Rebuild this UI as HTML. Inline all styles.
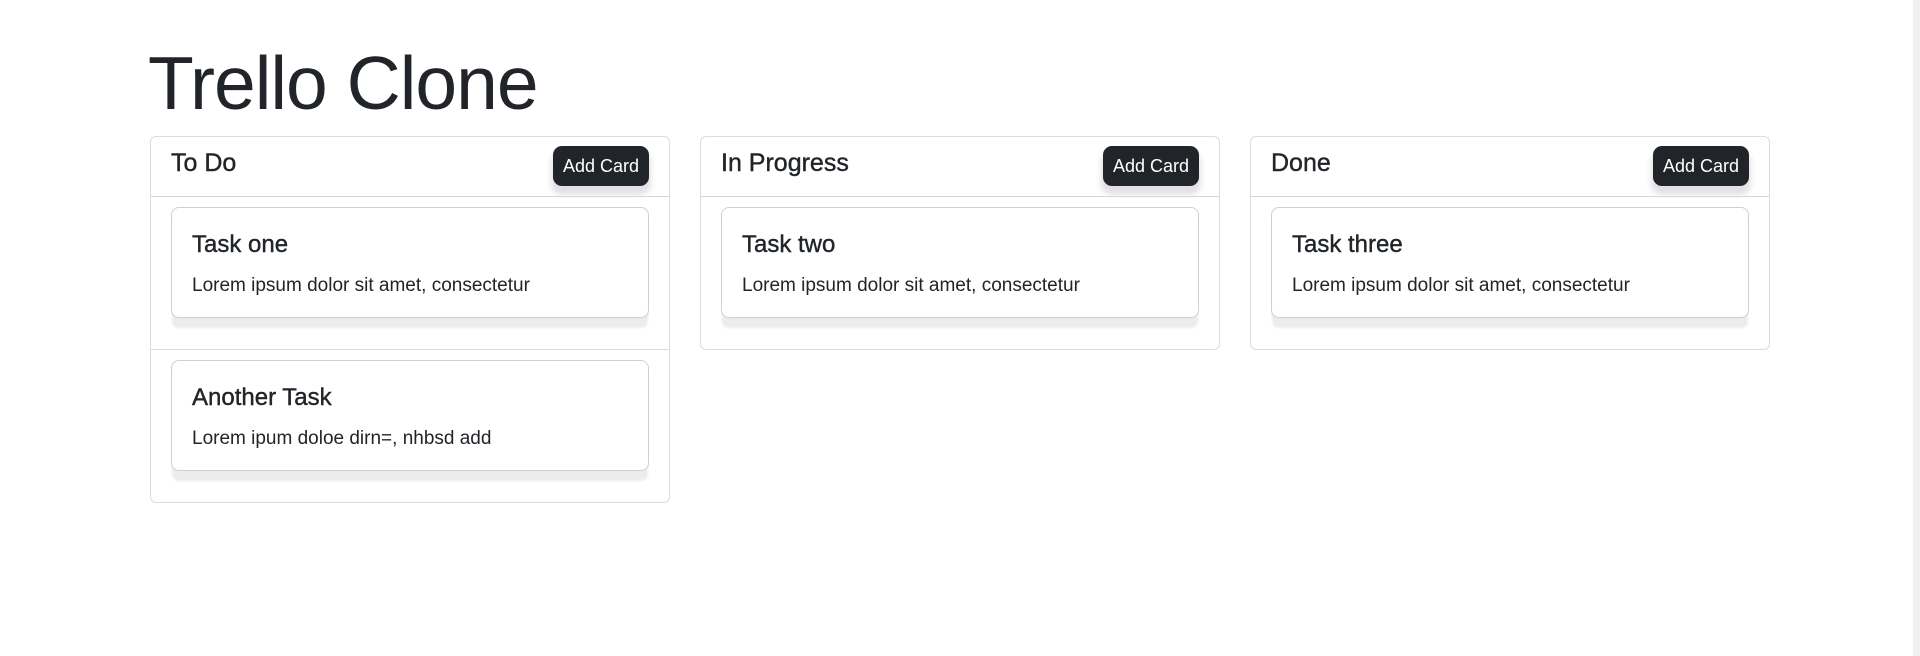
<!DOCTYPE html>
<html><head><meta charset="utf-8"><style>
*{box-sizing:border-box;margin:0;padding:0}
body{width:1920px;height:656px;background:#fff;font-family:"Liberation Sans",sans-serif;color:#212529;position:relative;overflow:hidden}
h1{position:absolute;left:148px;top:38px;font-size:75px;font-weight:300;line-height:90px;letter-spacing:-1px}
.col{position:absolute;top:136px;width:520px;border:1px solid #dcdcdc;border-radius:6px;background:#fff}
.hdr{height:60px;border-bottom:1px solid #d6d6d6;position:relative}
.hdr span{position:absolute;left:20px;top:10px;font-size:25px;line-height:32px;-webkit-text-stroke:0.4px #212529}
.btn{position:absolute;right:20px;top:9px;width:96px;height:40px;background:#212529;color:#fff;border-radius:9px;font-size:18px;line-height:40px;text-align:center;box-shadow:0 7px 6px 2px #e3e1e5}
.item{height:153px;border-bottom:1px solid #dcdcdc;padding:10px 20px 0}
.item:last-child{border-bottom:none;height:152px}
.card{height:111px;border:1px solid #cfcfcf;border-radius:8px;padding:0 20px;box-shadow:0 11px 2px -1px #ececec;background:#fff}
.card h5{font-size:24px;font-weight:normal;padding-top:22px;line-height:30px;-webkit-text-stroke:0.4px #212529}
.card p{font-size:19px;margin-top:15px;line-height:22px}
.sb{position:absolute;right:0;top:0;width:7px;height:656px;background:#f1f1f1}
</style></head><body>
<h1>Trello Clone</h1>
<div class="col" style="left:150px">
 <div class="hdr"><span>To Do</span><div class="btn">Add Card</div></div>
 <div class="item"><div class="card"><h5>Task one</h5><p>Lorem ipsum dolor sit amet, consectetur</p></div></div>
 <div class="item"><div class="card"><h5>Another Task</h5><p>Lorem ipum doloe dirn=, nhbsd add</p></div></div>
</div>
<div class="col" style="left:700px">
 <div class="hdr"><span>In Progress</span><div class="btn">Add Card</div></div>
 <div class="item"><div class="card"><h5>Task two</h5><p>Lorem ipsum dolor sit amet, consectetur</p></div></div>
</div>
<div class="col" style="left:1250px">
 <div class="hdr"><span>Done</span><div class="btn">Add Card</div></div>
 <div class="item"><div class="card"><h5>Task three</h5><p>Lorem ipsum dolor sit amet, consectetur</p></div></div>
</div>
<div class="sb"></div>
</body></html>
